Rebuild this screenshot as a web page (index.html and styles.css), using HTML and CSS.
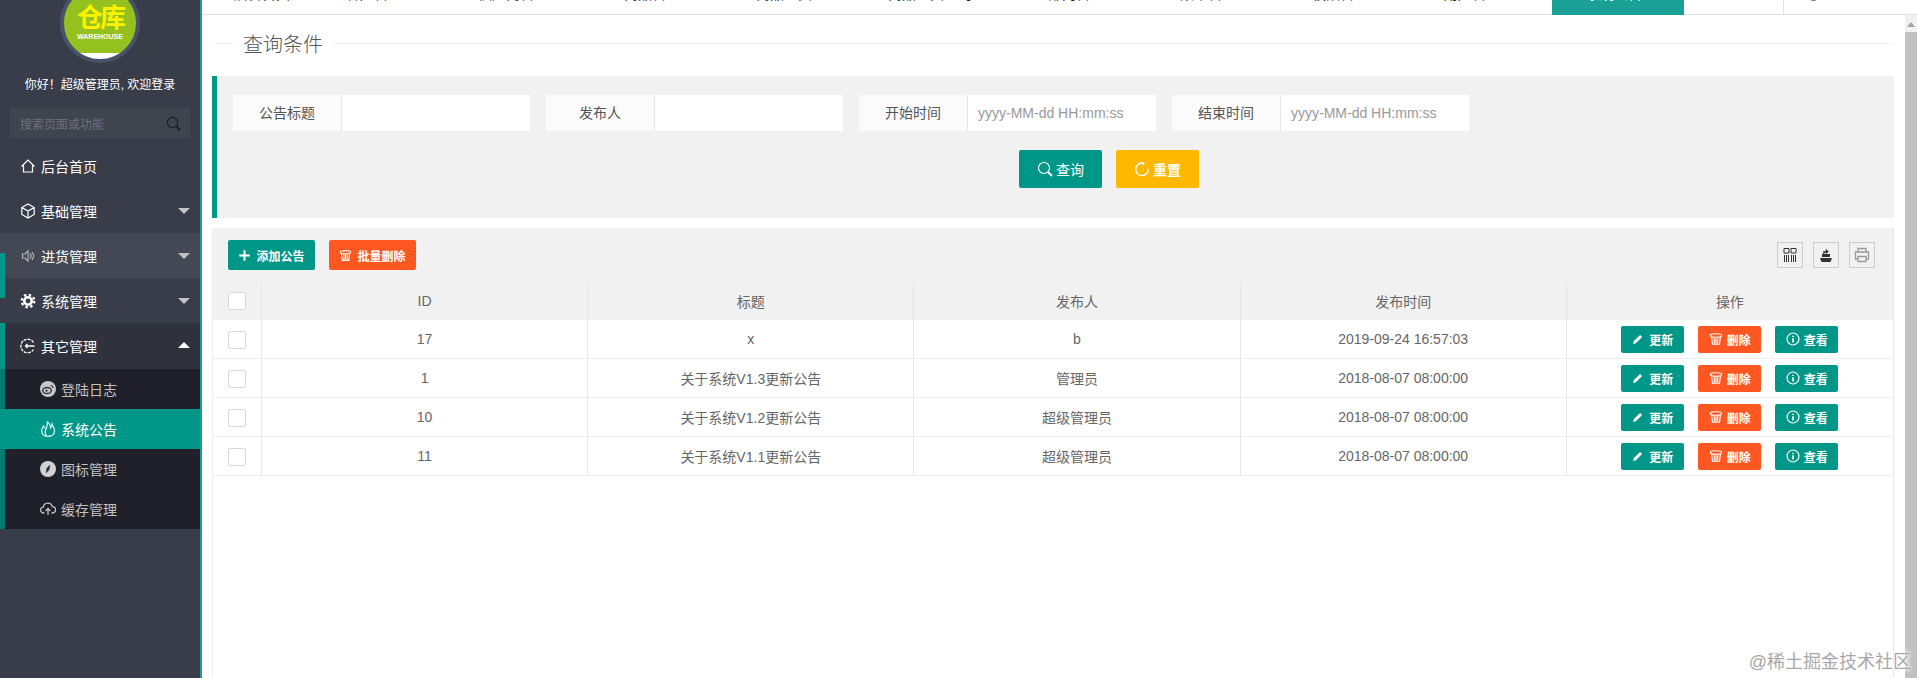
FILE: index.html
```html
<!DOCTYPE html>
<html lang="zh-CN">
<head>
    <meta charset="UTF-8">
    <title>系统公告</title>
    <link rel="stylesheet" href="styles.css">
</head>
<body>
    <svg class="icon-defs" width="0" height="0">
        <symbol id="i-home" viewBox="0 0 16 16"><path d="M1.5 8.5 8 2l6.5 6.5M3.5 7.5v6.5h9V7.5" fill="none" stroke="currentColor" stroke-width="1.2"/></symbol>
        <symbol id="i-cube" viewBox="0 0 16 16"><path d="M8 1l6.2 3.5v7L8 15l-6.2-3.5v-7zM1.8 4.5 8 8l6.2-3.5M8 8v7" fill="none" stroke="currentColor" stroke-width="1.2"/></symbol>
        <symbol id="i-sound" viewBox="0 0 16 16"><path d="M2.5 6H5l3-3v10l-3-3H2.500zM10 5.500c1.400 1.600 1.400 3.400 0 5M12 4c2 2.500 2 5.500 0 8" fill="none" stroke="currentColor" stroke-width="1.2"/></symbol>
        <symbol id="i-gear" viewBox="0 0 16 16"><circle cx="8" cy="8" r="6.200" fill="none" stroke="currentColor" stroke-width="2.400" stroke-dasharray="2.400 2.470"/><circle cx="8" cy="8" r="3.700" fill="none" stroke="currentColor" stroke-width="2.600"/></symbol>
        <symbol id="i-exit" viewBox="0 0 16 16"><path d="M13.500 4.500A6.800 6.800 0 1 0 13.500 11.500" fill="none" stroke="currentColor" stroke-width="1.300" stroke-dasharray="3 1"/><path d="M5.500 8h9M7.500 6 5.500 8l2 2" fill="none" stroke="currentColor" stroke-width="1.300"/></symbol>
        <symbol id="i-weibo" viewBox="0 0 16 16"><circle cx="8" cy="8" r="8" fill="#c9c9c9"/><ellipse cx="7" cy="9.500" rx="4.300" ry="3" fill="none" stroke="#33353f" stroke-width="1.400"/><circle cx="6.500" cy="9.700" r="1.100" fill="#33353f"/><path d="M10.500 4.500c1.500 0 2.500 1 2.300 2.500" fill="none" stroke="#33353f" stroke-width="1.200"/></symbol>
        <symbol id="i-fire" viewBox="0 0 16 16"><path d="M3.500 5C1.500 8 1 11 3 13.500 4.500 15.200 8 15.700 10.500 15 13.500 14.300 15 11.500 14.200 8 13.700 6 12.700 5 12.200 3.200 11.700 5 11 6.500 10.500 7 10.500 4.500 9.500 2 7.300.8 7.500 3.500 7 6 6 8 5 7 4 6 3.500 5ZM6.500 15C4.500 12 5 10 6 8" fill="none" stroke="currentColor" stroke-width="1.300"/></symbol>
        <symbol id="i-compass" viewBox="0 0 16 16"><circle cx="8" cy="8" r="8" fill="#d2d2d2"/><path d="M10.300 3.500 9.300 9 5.700 12.500 6.700 7z" fill="#2c2a4a"/></symbol>
        <symbol id="i-cloud" viewBox="0 0 16 16"><path d="M4.500 12H3.700A2.900 2.900 0 0 1 3.300 6.200 4.600 4.600 0 0 1 12.300 5.600 3.200 3.200 0 0 1 12.500 12h-1M8 14V7.500M5.500 10 8 7.500l2.500 2.500" fill="none" stroke="currentColor" stroke-width="1.300"/></symbol>
        <symbol id="i-search" viewBox="0 0 16 16"><circle cx="7" cy="7" r="5.500" fill="none" stroke="currentColor" stroke-width="1.200"/><path d="M11 11l4 4" fill="none" stroke="currentColor" stroke-width="2"/></symbol>
        <symbol id="i-refresh" viewBox="0 0 16 16"><path d="M9.500 2.200A6.300 6.300 0 1 0 14.300 8" fill="none" stroke="currentColor" stroke-width="1.400"/><path d="M8.500 .5 11 2.500 8.500 4.500z" fill="currentColor"/></symbol>
        <symbol id="i-plus" viewBox="0 0 16 16"><path d="M8 1.500v13M1.500 8h13" fill="none" stroke="currentColor" stroke-width="2.400"/></symbol>
        <symbol id="i-trash" viewBox="0 0 16 16"><path d="M1.500 4c0-1.500 3-2 6.500-2s6.500.5 6.500 2-3 2-6.500 2-6.500-.5-6.500-2zM3 6l1 8h8l1-8M6 7v6M8 7v6M10 7v6" fill="none" stroke="currentColor" stroke-width="1.300"/></symbol>
        <symbol id="i-edit" viewBox="0 0 16 16"><path d="M1.500 14.500 2.500 10.800 10.800 2.500l2.700 2.700-8.300 8.300z" fill="currentColor"/></symbol>
        <symbol id="i-info" viewBox="0 0 16 16"><circle cx="8" cy="8" r="6.800" fill="none" stroke="currentColor" stroke-width="1.300"/><path d="M8 4.200v1.600M8 7v5" fill="none" stroke="currentColor" stroke-width="1.800"/></symbol>
        <symbol id="i-cols" viewBox="0 0 16 16"><path d="M2 1.500h5v4.500H2zM9 1.500h5v4.500H9zM2.500 8v7M4.500 8v7M6.500 8v7M9.500 8v7M11.500 8v7M13.500 8v7" fill="none" stroke="#333" stroke-width="1"/></symbol>
        <symbol id="i-export" viewBox="0 0 16 16"><path d="M2 11h12l-1.500 4h-9zM4 10V7h8v3z" fill="#333"/><path d="M5.500 7V4.500H9M8 2.500l2.500 2L8 6.500z" fill="#333" stroke="#333" stroke-width=".6"/></symbol>
        <symbol id="i-print" viewBox="0 0 16 16"><path d="M4 5V1.500h8V5M4 12H1.500V5h13v7H12M4 9.500h8v5H4z" fill="none" stroke="#999" stroke-width="1.300"/></symbol>
    </svg>

    <aside class="sidebar">
        <div class="logo">
            <div class="logo-disc">
                <span class="logo-name">仓库</span>
                <span class="logo-sub">WAREHOUSE</span>
            </div>
        </div>
        <p class="greeting">你好！超级管理员, 欢迎登录</p>
        <div class="side-search">
            <span>搜索页面或功能</span>
            <svg class="side-search-icon"><use href="#i-search"/></svg>
        </div>
        <nav class="nav">
            <span class="nav-bar"></span>
            <a class="nav-item"><svg class="nav-icon"><use href="#i-home"/></svg>后台首页</a>
            <a class="nav-item"><svg class="nav-icon"><use href="#i-cube"/></svg>基础管理<i class="caret"></i></a>
            <a class="nav-item nav-item-hover"><svg class="nav-icon nav-icon-grey"><use href="#i-sound"/></svg>进货管理<i class="caret"></i></a>
            <a class="nav-item"><svg class="nav-icon"><use href="#i-gear"/></svg>系统管理<i class="caret"></i></a>
            <div class="nav-group">
                <a class="nav-item nav-item-open"><svg class="nav-icon"><use href="#i-exit"/></svg>其它管理<i class="caret caret-up"></i></a>
                <a class="sub-item"><svg class="nav-icon"><use href="#i-weibo"/></svg>登陆日志</a>
                <a class="sub-item sub-item-active"><svg class="nav-icon"><use href="#i-fire"/></svg>系统公告</a>
                <a class="sub-item"><svg class="nav-icon"><use href="#i-compass"/></svg>图标管理</a>
                <a class="sub-item"><svg class="nav-icon"><use href="#i-cloud"/></svg>缓存管理</a>
            </div>
        </nav>
    </aside>

    <div class="main">
        <div class="tabs">
            <span class="tab tab-first"><i class="tab-icon"></i>后台首页</span>
            <span class="tab"><i class="tab-icon"></i>客户管理</span>
            <span class="tab"><i class="tab-icon"></i>供应商管理</span>
            <span class="tab"><i class="tab-icon"></i>商品管理</span>
            <span class="tab"><i class="tab-icon"></i>商品进货</span>
            <span class="tab"><i class="tab-icon"></i>商品退货查询</span>
            <span class="tab"><i class="tab-icon tab-icon-square"></i>部门管理</span>
            <span class="tab"><i class="tab-icon"></i>菜单管理</span>
            <span class="tab"><i class="tab-icon"></i>权限管理</span>
            <span class="tab"><i class="tab-icon"></i>用户管理</span>
            <span class="tab tab-active"><i class="tab-icon"></i>系统公告</span>
            <div class="tabs-right"><i class="tab-icon"></i></div>
        </div>

        <div class="page">
            <div class="content">
                <div class="field-title">
                    <span class="field-line-left"></span>
                    <h2>查询条件</h2>
                    <span class="field-line"></span>
                </div>

                <form class="search-panel">
                    <div class="search-fields">
                        <div class="form-group">
                            <label>公告标题</label>
                            <input type="text">
                        </div>
                        <div class="form-group">
                            <label>发布人</label>
                            <input type="text">
                        </div>
                        <div class="form-group">
                            <label>开始时间</label>
                            <input type="text" placeholder="yyyy-MM-dd HH:mm:ss">
                        </div>
                        <div class="form-group">
                            <label>结束时间</label>
                            <input type="text" placeholder="yyyy-MM-dd HH:mm:ss">
                        </div>
                    </div>
                    <div class="search-btns">
                        <button type="button" class="btn btn-big btn-teal"><svg class="btn-icon"><use href="#i-search"/></svg>查询</button>
                        <button type="button" class="btn btn-big btn-yellow"><svg class="btn-icon"><use href="#i-refresh"/></svg>重置</button>
                    </div>
                </form>

                <div class="table-box">
                    <div class="toolbar">
                        <button type="button" class="btn btn-sm btn-teal"><svg class="btn-icon-sm"><use href="#i-plus"/></svg>添加公告</button>
                        <button type="button" class="btn btn-sm btn-red"><svg class="btn-icon-sm"><use href="#i-trash"/></svg>批量删除</button>
                        <div class="tools">
                            <span class="tool"><svg class="tool-icon"><use href="#i-cols"/></svg></span>
                            <span class="tool"><svg class="tool-icon"><use href="#i-export"/></svg></span>
                            <span class="tool"><svg class="tool-icon"><use href="#i-print"/></svg></span>
                        </div>
                    </div>
                    <table class="data-table">
                        <colgroup><col class="col-check"><col><col><col><col><col></colgroup>
                        <thead>
                            <tr>
                                <th><input type="checkbox"></th>
                                <th>ID</th>
                                <th>标题</th>
                                <th>发布人</th>
                                <th>发布时间</th>
                                <th>操作</th>
                            </tr>
                        </thead>
                        <tbody id="rows"></tbody>
                    </table>
                </div>
            </div>

            <div class="scrollbar">
                <i class="scroll-arrow"></i>
                <div class="scroll-thumb"></div>
            </div>
        </div>
    </div>

    <div class="watermark">@稀土掘金技术社区</div>

    <script>
        // Table rows
        const notices = [
            { id: 17, title: 'x', author: 'b', time: '2019-09-24 16:57:03' },
            { id: 1, title: '关于系统V1.3更新公告', author: '管理员', time: '2018-08-07 08:00:00' },
            { id: 10, title: '关于系统V1.2更新公告', author: '超级管理员', time: '2018-08-07 08:00:00' },
            { id: 11, title: '关于系统V1.1更新公告', author: '超级管理员', time: '2018-08-07 08:00:00' }
        ];
        const rows = document.getElementById('rows');
        notices.forEach(notice => {
            const row = document.createElement('tr');
            row.innerHTML = `
                <td><input type="checkbox"></td>
                <td>${notice.id}</td>
                <td>${notice.title}</td>
                <td>${notice.author}</td>
                <td>${notice.time}</td>
                <td>
                    <div class="row-btns">
                        <button type="button" class="btn btn-xs btn-teal"><svg class="btn-icon-edit"><use href="#i-edit"/></svg>更新</button>
                        <button type="button" class="btn btn-xs btn-red"><svg class="btn-icon-xs"><use href="#i-trash"/></svg>删除</button>
                        <button type="button" class="btn btn-xs btn-teal"><svg class="btn-icon-xs"><use href="#i-info"/></svg>查看</button>
                    </div>
                </td>
            `;
            rows.appendChild(row);
        });
    </script>
</body>
</html>
```

FILE: styles.css
```css
* {
    box-sizing: border-box;
}
html, body {
    height: 100%;
}
body {
    margin: 0;
    display: flex;
    overflow: hidden;
    font-family: "Liberation Sans", "Noto Sans CJK SC", sans-serif;
    font-size: 14px;
    color: #666;
    background-color: #fff;
}
.icon-defs {
    position: absolute;
}

/* Sidebar */
.sidebar {
    width: 202px;
    flex-shrink: 0;
    background-color: #393d49;
    border-right: 2px solid #1aa094;
    overflow: hidden;
}
.logo {
    height: 65px;
    display: flex;
    justify-content: center;
    align-items: flex-end;
}
.logo-disc {
    width: 80px;
    height: 80px;
    flex-shrink: 0;
    border: 4px solid #47536a;
    border-radius: 50%;
    background: linear-gradient(#95c11f 92%, #fff 92%);
    display: flex;
    flex-direction: column;
    align-items: center;
    justify-content: flex-end;
    padding-bottom: 18px;
    margin-bottom: 2px;
}
.logo-name {
    font-size: 26px;
    line-height: 26px;
    font-weight: bold;
    color: #fbf200;
    letter-spacing: -3px;
}
.logo-sub {
    font-size: 7px;
    line-height: 8px;
    margin-top: 2px;
    font-weight: bold;
    color: #fff;
}
.greeting {
    margin: 11px 0 0;
    text-align: center;
    font-size: 12px;
    line-height: 18px;
    color: #fff;
}
.side-search {
    height: 30px;
    margin: 14px 10px 5px;
    padding: 0 9px 0 10px;
    background-color: #40444f;
    display: flex;
    align-items: center;
    justify-content: space-between;
    font-size: 12px;
    color: #6d707a;
}
.side-search-icon {
    width: 15px;
    height: 15px;
    color: #1c1e26;
}
.nav {
    position: relative;
}
.nav-bar {
    position: absolute;
    z-index: 1;
    left: 0;
    top: 110px;
    width: 5px;
    height: 45px;
    background-color: #009688;
}
.nav-item, .sub-item {
    display: flex;
    align-items: center;
    position: relative;
    color: #fff;
}
.nav-item {
    height: 45px;
    padding-left: 20px;
}
.nav-item-hover {
    background-color: #444855;
}
.nav-item-open {
    background-color: #2f323c;
    height: 46px;
}
.nav-icon {
    width: 16px;
    height: 16px;
    margin-right: 5px;
    flex-shrink: 0;
}
.nav-icon-grey {
    color: #b5b5b5;
}
.caret {
    position: absolute;
    right: 10px;
    top: 20px;
    border-left: 6px solid transparent;
    border-right: 6px solid transparent;
    border-top: 6px solid #c2c2c2;
}
.caret-up {
    top: 19px;
    border-top: 0;
    border-bottom: 6px solid #fff;
}
.nav-group {
    box-shadow: inset 5px 0 0 #009688;
    background-color: #1f2029;
}
.nav-group .nav-item-open {
    box-shadow: inset 5px 0 0 #009688;
}
.sub-item {
    height: 40px;
    padding-left: 40px;
    color: #c2c2c2;
    box-shadow: inset 5px 0 0 #00796e;
}
.sub-item-active {
    background-color: #009688;
    color: #fff;
    box-shadow: none;
}
.sub-item-active .nav-icon {
    color: #c8f5ee;
}

/* Top tabs, mostly scrolled out of the window */
.main {
    flex: 1;
    min-width: 0;
    display: flex;
    flex-direction: column;
}
.tabs {
    height: 15px;
    flex-shrink: 0;
    display: flex;
    align-items: flex-end;
    padding-left: 16px;
    border-bottom: 1px solid #e2e2e2;
    color: #222;
    position: relative;
}
.tab {
    height: 40px;
    margin-top: -26px;
    margin-right: 60px;
    padding-bottom: 3px;
    display: flex;
    align-items: center;
    flex-shrink: 0;
    white-space: nowrap;
}
.tab-first {
    margin-right: 40px;
}
.tab-active {
    height: 41px;
    margin-left: -8px;
    margin-right: 0;
    margin-bottom: -1px;
    padding: 0 42px 4px 18px;
    background-color: #1aa094;
    color: #fff;
}
.tab-icon {
    width: 13px;
    height: 13px;
    margin-right: 3px;
    border: 1px solid #666;
    border-radius: 50%;
}
.tab-icon-square {
    border-radius: 0;
}
.tabs-right {
    margin-left: auto;
    width: 134px;
    height: 14px;
    padding-left: 23px;
    border-left: 1px solid #e2e2e2;
    overflow: hidden;
}
.tabs-right .tab-icon {
    display: block;
    margin-top: -12px;
}

.page {
    flex: 1;
    min-height: 0;
    display: flex;
}
.content {
    flex: 1;
    min-width: 0;
    padding-right: 11px;
    display: flex;
    flex-direction: column;
}

/* Query form */
.field-title {
    height: 56px;
    margin: 0 1px 5px 11px;
    display: flex;
    align-items: center;
}
.field-title h2 {
    margin: 0;
    padding: 0 9px 0 10px;
    font-size: 20px;
    font-weight: 300;
    color: #555;
}
.field-line-left {
    width: 20px;
    height: 1px;
    background-color: #f2f2f2;
}
.field-line {
    flex: 1;
    height: 1px;
    background-color: #f2f2f2;
}
.search-panel {
    height: 142px;
    margin-left: 10px;
    padding: 19px 0 0 16px;
    border-left: 5px solid #009688;
    background-color: #f1f1f1;
}
.search-fields {
    display: flex;
    gap: 16px;
}
.form-group {
    width: 297px;
    height: 36px;
    display: flex;
}
.form-group label {
    width: 109px;
    flex-shrink: 0;
    line-height: 36px;
    text-align: center;
    color: #555;
    background-color: #fbfbfb;
    border-right: 1px solid #e6e6e6;
}
.form-group input {
    flex: 1;
    min-width: 0;
    padding: 0 10px;
    border: 0;
    background-color: #fff;
    font: inherit;
}
.form-group input::placeholder {
    color: #999;
}
.search-btns {
    display: flex;
    gap: 14px;
    margin-top: 19px;
    padding-left: 786px;
}

/* Buttons */
.btn {
    display: inline-flex;
    align-items: center;
    justify-content: center;
    padding: 0;
    border: 0;
    border-radius: 2px;
    color: #fff;
    font-family: inherit;
    cursor: pointer;
}
.btn-big {
    width: 83px;
    height: 38px;
    font-size: 14px;
}
.btn-sm {
    width: 87px;
    height: 30px;
    font-size: 12px;
    font-weight: bold;
}
.btn-xs {
    width: 63px;
    height: 27px;
    font-size: 12px;
    font-weight: bold;
}
.btn-teal {
    background-color: #009688;
}
.btn-yellow {
    background-color: #ffb800;
    font-weight: bold;
}
.btn-red {
    background-color: #ff5722;
}
.btn-icon {
    width: 16px;
    height: 16px;
    margin-right: 3px;
}
.btn-icon-sm {
    width: 13px;
    height: 13px;
    margin-right: 5px;
}
.btn-icon-xs {
    width: 14px;
    height: 14px;
    margin-right: 4px;
}
.btn-icon-edit {
    width: 12px;
    height: 12px;
    margin-right: 5px;
}

/* Table */
.table-box {
    flex: 1;
    margin: 10px 0 0 10px;
    border-left: 1px solid #eee;
    border-right: 1px solid #e6e6e6;
}
.toolbar {
    height: 54px;
    padding: 12px 18px 0 15px;
    display: flex;
    align-items: flex-start;
    gap: 14px;
    background-color: #f1f1f1;
}
.tools {
    margin-left: auto;
    padding-top: 2px;
    display: flex;
    gap: 10px;
}
.tool {
    width: 26px;
    height: 26px;
    display: flex;
    align-items: center;
    justify-content: center;
    border: 1px solid #ccc;
}
.tool-icon {
    width: 16px;
    height: 16px;
}
.data-table {
    width: 100%;
    table-layout: fixed;
    border-collapse: separate;
    border-spacing: 0;
}
.col-check {
    width: 49px;
}
.data-table th, .data-table td {
    padding: 0;
    text-align: center;
    font-weight: normal;
    border-right: 1px solid #e6e6e6;
    border-bottom: 1px solid #eee;
}
.data-table th:last-child, .data-table td:last-child {
    border-right: 0;
}
.data-table th {
    height: 38px;
    background-color: #f1f1f1;
    border-bottom: 0;
}
.data-table td {
    height: 39px;
}
.data-table input {
    appearance: none;
    display: block;
    width: 18px;
    height: 18px;
    margin: 0 auto 0 15px;
    background-color: #fff;
    border: 1px solid #d8d8d8;
    border-radius: 2px;
}
.data-table td input {
    margin-top: 1px;
}
.row-btns {
    display: flex;
    justify-content: center;
    gap: 14px;
}

/* Fake window scrollbar */
.scrollbar {
    width: 12px;
    flex-shrink: 0;
    padding-top: 7px;
    background-color: #f1f1f1;
    display: flex;
    flex-direction: column;
    align-items: center;
}
.scroll-arrow {
    border-left: 4px solid transparent;
    border-right: 4px solid transparent;
    border-bottom: 5px solid #a3a3a3;
}
.scroll-thumb {
    width: 100%;
    flex: 1;
    margin-top: 5px;
    background-color: #c1c1c1;
}

.watermark {
    position: absolute;
    right: 6px;
    bottom: 5px;
    font-size: 18px;
    line-height: 22px;
    color: #a8a8a8;
    text-shadow: 0 0 4px #fff, 0 0 4px #fff, 0 0 6px #fff;
}
```
